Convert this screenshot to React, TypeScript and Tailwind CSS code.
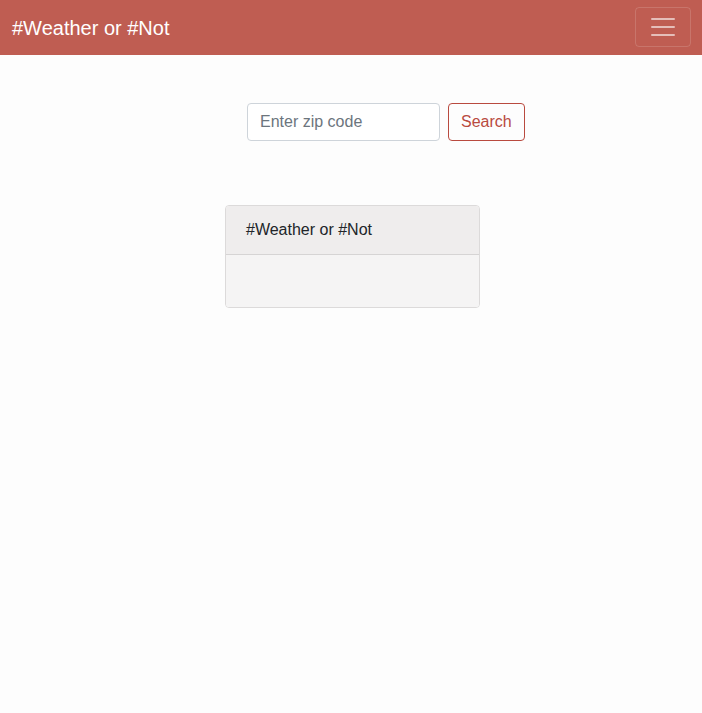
export default function App() {
  return (
    <div
      className="min-h-[713px] bg-[#fdfdfd] text-[#212529]"
      style={{ fontFamily: '"Liberation Sans", Arial, sans-serif' }}
    >
      <nav className="h-[55px] bg-[#bf5d52] flex items-start justify-between pl-3 pr-[11px]">
        <span className="mt-[18px] text-white text-[20px] leading-none">#Weather or #Not</span>
        <button className="mt-[7px] w-[56px] h-[40px] rounded-[4px] border border-white/15 flex items-center justify-center">
          <svg width="30" height="30" viewBox="0 0 30 30">
            <path
              d="M4 7h22M4 15h22M4 23h22"
              stroke="rgba(255,255,255,0.6)"
              strokeWidth="2"
              strokeLinecap="round"
            />
          </svg>
        </button>
      </nav>

      <div className="pt-[48px] pl-[247px] flex gap-2">
        <input
          placeholder="Enter zip code"
          className="w-[193px] h-[38px] px-3 rounded-[4px] border border-[#ced4da] bg-white text-base placeholder:text-[#6c757d] outline-none"
        />
        <button className="h-[38px] px-3 rounded-[4px] border border-[#b94a3f] text-[#b94a3f] text-base">
          Search
        </button>
      </div>

      <div className="mt-[64px] w-[255px] ml-[225px] rounded-[4px] border border-[#dcdada] overflow-hidden">
        <div className="h-[49px] bg-[#efeded] border-b border-[#d6d4d4] flex items-center px-5 text-base">
          #Weather or #Not
        </div>
        <div className="h-[52px] bg-[#f5f4f4]" />
      </div>
    </div>
  );
}
